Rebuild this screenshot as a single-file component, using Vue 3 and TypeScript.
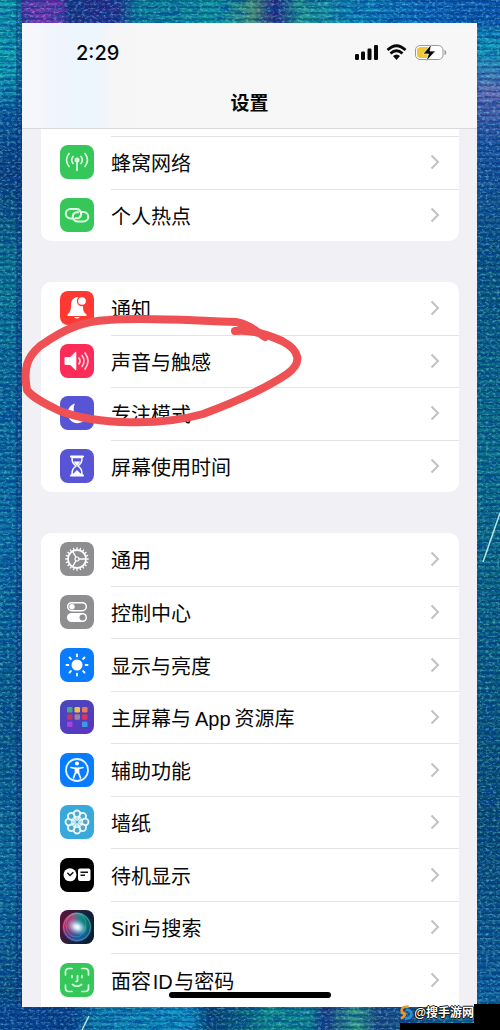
<script setup lang="ts">
interface Row { icon: string; label: string }
interface Group { name: string; rows: Row[] }

const groups: Group[] = [
  { name: 'network', rows: [
    { icon: 'cellular', label: '蜂窝网络' },
    { icon: 'hotspot', label: '个人热点' },
  ] },
  { name: 'alerts', rows: [
    { icon: 'bell', label: '通知' },
    { icon: 'sound', label: '声音与触感' },
    { icon: 'moon', label: '专注模式' },
    { icon: 'hourglass', label: '屏幕使用时间' },
  ] },
  { name: 'general', rows: [
    { icon: 'gear', label: '通用' },
    { icon: 'toggles', label: '控制中心' },
    { icon: 'sun', label: '显示与亮度' },
    { icon: 'apps', label: '主屏幕与\u2009App\u2009资源库' },
    { icon: 'access', label: '辅助功能' },
    { icon: 'flower', label: '墙纸' },
    { icon: 'standby', label: '待机显示' },
    { icon: 'siri', label: 'Siri\u200A与搜索' },
    { icon: 'face', label: '面容\u200AID\u200A与密码' },
  ] },
]

const spokes = (n: number): number[] => Array.from({ length: n }, (_, i) => (i * 360) / n)
const appColors = ['#45a88b', '#f4c04c', '#ee7b4c', '#c4365e', '#9a85a0', '#d9365d', '#a544dc', '', '#3a9be0']
</script>

<template>
  <div class="page">
    <svg class="fabric" preserveAspectRatio="none" viewBox="0 0 500 1030" aria-hidden="true">
      <defs>
        <linearGradient id="gl" x1="0" y1="0" x2="0" y2="1">
          <stop offset="0" stop-color="#0a9cab" /><stop offset=".07" stop-color="#06a5b3" />
          <stop offset=".11" stop-color="#06559a" /><stop offset=".17" stop-color="#073978" />
          <stop offset=".26" stop-color="#05758f" /><stop offset=".4" stop-color="#04669a" />
          <stop offset=".52" stop-color="#066ea4" /><stop offset=".7" stop-color="#035685" />
          <stop offset=".85" stop-color="#076b99" /><stop offset="1" stop-color="#063f78" />
        </linearGradient>
        <linearGradient id="gr" x1="0" y1="0" x2="0" y2="1">
          <stop offset="0" stop-color="#0755b0" /><stop offset=".05" stop-color="#0b9cbe" />
          <stop offset=".09" stop-color="#6b66b5" /><stop offset=".14" stop-color="#1c50a0" />
          <stop offset=".25" stop-color="#06517f" /><stop offset=".45" stop-color="#057087" />
          <stop offset=".65" stop-color="#05597d" /><stop offset=".8" stop-color="#06486e" />
          <stop offset=".96" stop-color="#0a5a9a" /><stop offset="1" stop-color="#087f98" />
        </linearGradient>
        <linearGradient id="gt">
          <stop offset="0" stop-color="#4a2ba0" /><stop offset=".02" stop-color="#7a2bb4" />
          <stop offset=".08" stop-color="#7a2bb4" /><stop offset=".1" stop-color="#173083" />
          <stop offset=".15" stop-color="#28288c" /><stop offset=".2" stop-color="#28288c" />
          <stop offset=".24" stop-color="#077d9b" /><stop offset=".42" stop-color="#07949f" />
          <stop offset=".48" stop-color="#489670" /><stop offset=".53" stop-color="#2b2386" />
          <stop offset=".58" stop-color="#209a8c" /><stop offset=".7" stop-color="#0785bd" />
          <stop offset=".84" stop-color="#0864bd" /><stop offset="1" stop-color="#0653b0" />
        </linearGradient>
        <linearGradient id="gb">
          <stop offset="0" stop-color="#064190" /><stop offset=".14" stop-color="#063a88" />
          <stop offset=".2" stop-color="#0680b0" /><stop offset=".38" stop-color="#0692c8" />
          <stop offset=".42" stop-color="#063d70" /><stop offset=".5" stop-color="#066a80" />
          <stop offset=".54" stop-color="#0b958a" /><stop offset=".62" stop-color="#088090" />
          <stop offset=".65" stop-color="#1d3580" /><stop offset=".71" stop-color="#2fa080" />
          <stop offset=".76" stop-color="#1d4580" /><stop offset="1" stop-color="#087e9c" />
        </linearGradient>
        <filter id="weave" x="0" y="0" width="100%" height="100%">
          <feTurbulence type="fractalNoise" baseFrequency=".28 .5" numOctaves="3" seed="8" />
          <feColorMatrix values="0 0 0 0 .35  0 0 0 0 .85  0 0 0 0 .9  3.2 0 0 0 -1.6" />
        </filter>
        <filter id="shade" x="0" y="0" width="100%" height="100%">
          <feTurbulence type="fractalNoise" baseFrequency=".06 .3" numOctaves="3" seed="21" />
          <feColorMatrix values="0 0 0 0 0  0 0 0 0 .05  0 0 0 0 .3  0 3.4 0 0 -1.5" />
        </filter>
        <pattern id="thread" width="6" height="6" patternUnits="userSpaceOnUse">
          <path d="M0 1Q3 2 6 1" fill="none" stroke="#022656" stroke-opacity=".4" stroke-width="2" />
          <path d="M0 4h3" stroke="#6dd8df" stroke-opacity=".3" />
        </pattern>
      </defs>
      <rect width="250" height="1030" fill="url(#gl)" />
      <rect x="250" width="250" height="1030" fill="url(#gr)" />
      <path d="M16 0h8v1030h-8Z" fill="#082a78" fill-opacity=".45" />
      <rect x="22" width="478" height="25" fill="url(#gt)" />
      <rect x="0" y="1004" width="500" height="26" fill="url(#gb)" />
      <rect width="500" height="1030" fill="url(#thread)" />
      <rect width="500" height="1030" filter="url(#shade)" opacity=".6" />
      <rect width="500" height="1030" filter="url(#weave)" opacity=".4" />
      <path d="m500 513-17 49M82 1030l7-14" stroke="#b6e4db" stroke-width="1.5" />
    </svg>

    <main class="phone">
      <header class="top">
        <div class="status">
          <time>2:29</time>
          <svg class="signals" viewBox="0 0 92 20" role="img" aria-label="信号、无线网络、电池">
            <g><rect x="0" y="11" width="4" height="6" rx="1.2" /><rect x="6" y="8.5" width="4" height="8.5" rx="1.2" /><rect x="12.500" y="5.5" width="4" height="11.5" rx="1.2" /><rect x="19" y="2" width="4" height="15" rx="1.2" /></g>
            <g fill="none" stroke="#080808" stroke-width="2.7"><path d="M32.500 7Q41.500-1.500 50.500 7" /><path d="M35.500 10.500Q41.500 5 47.500 10.500" /></g>
            <path d="M38 13Q41.500 10 45 13L41.500 17Z" />
            <rect x="60.500" y="2.500" width="27.500" height="14" rx="4.500" fill="#fff" stroke="#999" />
            <path d="M66 4h7v11h-7q-4 0-4-3V7q0-3 4-3Z" fill="#f2c735" />
            <path d="M89.500 7.500q2 2 0 4" fill="none" stroke="#999" stroke-width="1.500" />
            <path d="M76.500 1 68 11h5.500L71 18.500l9.500-10.500H75Z" stroke="#f6f6f6" stroke-width=".7" />
          </svg>
        </div>
        <h1>设置</h1>
      </header>

      <nav class="list" aria-label="设置">
        <ul v-for="group in groups" :key="group.name" :class="['group', group.name]">
          <li v-for="row in group.rows" :key="row.label">
            <a href="#">
              <svg :class="['icon', row.icon]" viewBox="0 0 34 34" aria-hidden="true">
                <g v-if="row.icon === 'cellular'" fill="none" stroke="#e2ffe8" stroke-width="1.6" stroke-linecap="round">
                  <circle cx="17" cy="15" r="1.7" fill="#e2ffe8" /><path d="M17 16v9.500M13 11.500q-2.700 3.500 0 7M21 11.500q2.700 3.500 0 7M9 8.500q-5 6.500 0 13M25 8.500q5 6.500 0 13" />
                </g>
                <g v-else-if="row.icon === 'hotspot'" fill="none" stroke="#dcffe4" stroke-width="2">
                  <path d="M12.500 20.500H10.500a4.700 4.700 0 0 1 0-9.500h6a4.800 4.800 0 0 1 2.500 8.800q-2 1-4 0M21.500 14h2a4.700 4.700 0 0 1 0 9.500h-6a4.800 4.800 0 0 1-2.500-8.800q2-1 4 0" />
                </g>
                <g v-else-if="row.icon === 'bell'" fill="#fff">
                  <path d="M17 6q-6 1-6 8c0 6-1 7-3.500 9.500V25h19v-1.500C23.500 21 23 20 23 14q0-7-6-8ZM14 26h6q-3 3-6 0Z" /><circle cx="22" cy="10" r="4.5" stroke="#ff3932" stroke-width="1.3" />
                </g>
                <g v-else-if="row.icon === 'sound'">
                  <path d="M5.500 13h4.800l5-5q1-.7 1 1v16q0 1.700-1 1l-5-5H5.500q-1 0-1-1v-6q0-1 1-1Z" fill="#fff" /><path d="M19 14q2 3 0 6M22 11.500q4 5.500 0 11M25 9q6 8 0 16" fill="none" stroke="#ffd8e1" stroke-width="1.6" stroke-linecap="round" />
                </g>
                <path v-else-if="row.icon === 'moon'" d="M15 7.500a10 10 0 1 0 11.500 14Q16 23 14 16q-1-5 1-8.500Z" fill="#fff" />
                <g v-else-if="row.icon === 'hourglass'">
                  <path d="M11 7.500h12M11 26.500h12" stroke="#fff" stroke-width="2.2" stroke-linecap="round" /><path d="M12 8.500h10c0 5-1 6-4 8.500 3 2.500 4 3.500 4 8.500H12c0-5 1-6 4-8.500-3-2.500-4-3.500-4-8.500Z" fill="#5656d6" stroke="#fff" stroke-width="1.5" /><path d="M13.500 12.500h7L17 17v4l4 4h-8l4-4v-4Z" fill="#fff" />
                </g>
                <g v-else-if="row.icon === 'gear'" fill="none" stroke="#fff">
                  <circle cx="17" cy="17" r="9" stroke-width="1.8" />
                  <path d="M17 17h8.500M17 17l-4.300-7.500M17 17l-4.300 7.500" stroke-width="1.5" /><circle cx="17" cy="17" r="2" fill="#8e8e93" stroke-width="1.2" />
                  <path v-for="a in spokes(20)" :key="a" d="M17 7.500V5.300" stroke-width="1.3" :transform="`rotate(${a} 17 17)`" />
                </g>
                <g v-else-if="row.icon === 'toggles'">
                  <rect x="7.700" y="7.700" width="18.600" height="8" rx="4" fill="none" stroke="#fff" stroke-width="1.5" /><circle cx="12" cy="11.700" r="2.700" fill="#fff" />
                  <rect x="7" y="18" width="20" height="9" rx="4.500" fill="#fff" /><circle cx="22.500" cy="22.500" r="3" fill="#8e8e90" />
                </g>
                <g v-else-if="row.icon === 'sun'">
                  <circle cx="17" cy="17" r="5.500" fill="#fff" /><path v-for="a in spokes(8)" :key="a" d="M17 8.300V6.500" stroke="#fff" stroke-width="2" stroke-linecap="round" :transform="`rotate(${a} 17 17)`" />
                </g>
                <g v-else-if="row.icon === 'apps'">
                  <template v-for="(color, i) in appColors" :key="i"><rect v-if="color" :x="7 + (i % 3) * 7.500" :y="7 + Math.floor(i / 3) * 7.300" width="5.500" height="5.500" rx="1.200" :fill="color" /></template>
                </g>
                <g v-else-if="row.icon === 'access'">
                  <circle cx="17" cy="17" r="11" fill="none" stroke="#e5f5ff" stroke-width="1.8" /><circle cx="17" cy="10.500" r="2" fill="#fff" /><path d="M11 14.500 15.500 15.500v4l-2 5.500M23 14.500 18.500 15.500v4l2 5.500" fill="none" stroke="#fff" stroke-width="1.7" stroke-linecap="round" /><path d="M15 14.500h4v6h-4Z" fill="#fff" />
                </g>
                <g v-else-if="row.icon === 'flower'">
                  <circle v-for="a in spokes(8)" :key="a" cx="17" cy="8.800" r="3.300" fill="#54a7c9" stroke="#e7fbff" stroke-width="1.8" :transform="`rotate(${a} 17 17)`" />
                  <circle cx="17" cy="17" r="5.200" fill="#d9f3f8" /><path v-for="a in spokes(8)" :key="`p${a}`" d="M17 16V11.500" stroke="#8cc6d8" stroke-width=".7" :transform="`rotate(${a} 17 17)`" /><circle cx="17" cy="17" r="1.200" fill="#48a5c3" />
                </g>
                <g v-else-if="row.icon === 'standby'">
                  <circle cx="10" cy="16.800" r="6.500" fill="#fff" /><path d="m7.300 14.800 2.700 2.700 3.300-3.300" fill="none" stroke="#111" stroke-width="1.5" /><rect x="18" y="10.500" width="12.500" height="12.500" rx="2" fill="#fff" /><path d="M20.500 14.200h7.500M20.500 17.200h4.500" stroke="#111" stroke-width="1.4" />
                </g>
                <g v-else-if="row.icon === 'siri'">
                  <defs>
                    <radialGradient id="glow"><stop offset="0" stop-color="#fff" /><stop offset=".25" stop-color="#e8f5ff" stop-opacity=".9" /><stop offset="1" stop-color="#69bdfa" stop-opacity="0" /></radialGradient>
                    <linearGradient id="orb"><stop offset="0" stop-color="#c51755" /><stop offset=".35" stop-color="#a5507e" /><stop offset=".6" stop-color="#168c89" /><stop offset="1" stop-color="#075e62" /></linearGradient>
                    <linearGradient id="orbshade" x1="0" y1="0" x2="0" y2="1"><stop offset=".5" stop-color="#123d9b" stop-opacity="0" /><stop offset="1" stop-color="#1750a5" /></linearGradient>
                  </defs>
                  <circle cx="17" cy="17" r="14.500" fill="url(#orb)" /><circle cx="17" cy="17" r="14.500" fill="url(#orbshade)" /><circle cx="17" cy="17" r="13.500" fill="none" stroke="#a9dae0" stroke-opacity=".4" /><ellipse cx="16" cy="15" rx="10" ry="12" fill="none" stroke="#73ddd1" stroke-opacity=".3" /><ellipse cx="17" cy="17" rx="11" ry="8" fill="url(#glow)" transform="rotate(25 17 17)" />
                </g>
                <g v-else fill="none" stroke="#dcffe4" stroke-width="1.7" stroke-linecap="round">
                  <path d="M5.500 12V9q0-3.500 3.500-3.500h3M22 5.500h3q3.500 0 3.500 3.500v3M28.500 22v3q0 3.500-3.500 3.500h-3M12 28.500H9q-3.500 0-3.500-3.500v-3M12 12.500v2M22 12.500v2M17.500 12.500v5q0 1-1.500 1M12.500 21.500q4.500 3.500 9 0" />
                </g>
              </svg>
              <span class="label">{{ row.label }}</span>
              <svg class="chevron" viewBox="0 0 10 16" aria-hidden="true"><path d="m1.500 1.500 6.500 6.500-6.500 6.500" /></svg>
            </a>
          </li>
        </ul>
      </nav>

      <svg class="marker" viewBox="0 0 280 112" aria-hidden="true">
        <path d="M213 17C231 15 249 22 260 27C279 37 280 49 265 60C243 75 213 88 181 100C139 112 75 111 38 97C23 90 11 84 5 76C1 55 5 43 18 32C42 15 61 7 86 6C128 3 172 7 214 8C226 10 234 17 243 23" />
      </svg>
      <div class="home-bar"></div>
    </main>

    <div class="corner"></div>
    <div class="credit">
      <svg viewBox="0 0 16 16" aria-hidden="true"><path d="M11 1Q3 0 3 5q0 3 4 4-1 4-5 5" fill="none" stroke="#ed962b" stroke-width="3" /><path d="M8 4q7 1 6 6-1 5-7 4" fill="none" stroke="#2c8fd1" stroke-width="3" /></svg>
      <span>@搜手游网</span>
    </div>
  </div>
</template>

<style>
body { margin: 0; }
</style>
<style scoped>
* { box-sizing: border-box; }
.page { position: relative; display: flex; min-height: 100vh; padding: 23px 23px 23px 22px; overflow: hidden; background: #086d91; font-family: "Liberation Sans", "Noto Sans CJK SC", sans-serif; color: #080808; }
.fabric { position: absolute; inset: 0; width: 100%; height: 100%; }
.phone { position: relative; flex: 1; min-width: 0; display: flex; flex-direction: column; background: #f0f0f5; }
.top { height: 106px; flex: none; border-bottom: 1px solid #d9d9dc; background: linear-gradient(90deg, #f6f7fb, #edf5fd 12%, #edf5fd 17%, #f6f6f7 20%, #f7f7f8); }
.status { display: flex; align-items: center; justify-content: space-between; height: 60px; padding: 0 30px 0 54px; }
time { font-family: Inter, sans-serif; font-size: 20px; line-height: 24px; font-weight: 500; }
.signals { width: 92px; height: 20px; fill: #080808; }
h1 { margin: 9px 0 0; font-size: 19px; line-height: 24px; font-weight: 700; text-align: center; }
.list { flex: 1; display: flex; flex-direction: column; gap: 41px; padding: 0 18px 0 19px; }
.group { display: grid; grid-auto-rows: 1fr; margin: 0; padding: 0; list-style: none; background: #fff; border-radius: 10px; }
.network { flex: 2 0 0; position: relative; border-radius: 0 0 10px 10px; margin-top: 7px; box-shadow: 0 -7px #fff; }
.alerts { flex: 4 0 0; }
.general { flex: 9 0 0; padding-bottom: 1px; border-radius: 10px 10px 0 0; }
li { position: relative; display: grid; }
li + li::before, .network li::before { content: ""; position: absolute; top: 0; left: 70px; right: 0; height: 1px; background: #e3e3e6; }
a { display: flex; align-items: center; gap: 17px; padding: 0 19px; color: inherit; text-decoration: none; }
.icon { width: 34px; height: 34px; flex: none; border-radius: 8px; }
.label { flex: 1; padding-top: 4px; font-size: 20px; line-height: 28px; white-space: nowrap; }
.chevron { width: 10px; height: 16px; fill: none; stroke: #c2c2c6; stroke-width: 2; }
.cellular, .hotspot, .face { background: #35c759; }
.bell { background: #ff3932; }
.sound { background: #fc2b58; }
.moon, .hourglass { background: #5755d5; }
.gear, .toggles { background: #8e8e90; }
.sun, .access { background: #087bff; }
.apps { background: linear-gradient(145deg, #4849bd, #5a35bd); }
.flower { background: #39a9dc; }
.standby { background: #000; }
.siri { background: linear-gradient(110deg, #621038, #17243e 55%, #091b2a); }
.marker { position: absolute; left: 0; top: 291px; width: 280px; height: 112px; overflow: visible; fill: none; stroke: #ee5054; stroke-width: 8; stroke-linecap: round; stroke-linejoin: round; }
.home-bar { position: absolute; left: 50%; bottom: 9px; width: 162px; height: 6px; margin-left: -81px; border-radius: 3px; background: #000; }
.corner { position: absolute; right: 0; bottom: 0; width: 100px; height: 26px; background: linear-gradient(#000, #000) right / 26px 26px no-repeat, linear-gradient(#000, #000) bottom / 100px 7px no-repeat; }
.credit { position: absolute; right: 26px; bottom: 8px; display: flex; align-items: center; gap: 1px; color: #fff; font-size: 12px; line-height: 18px; font-weight: 700; white-space: nowrap; text-shadow: 1px 0 #111, -1px 0 #111, 0 1px #111, 0 -1px #111; }
.credit svg { width: 14px; height: 16px; }
</style>
